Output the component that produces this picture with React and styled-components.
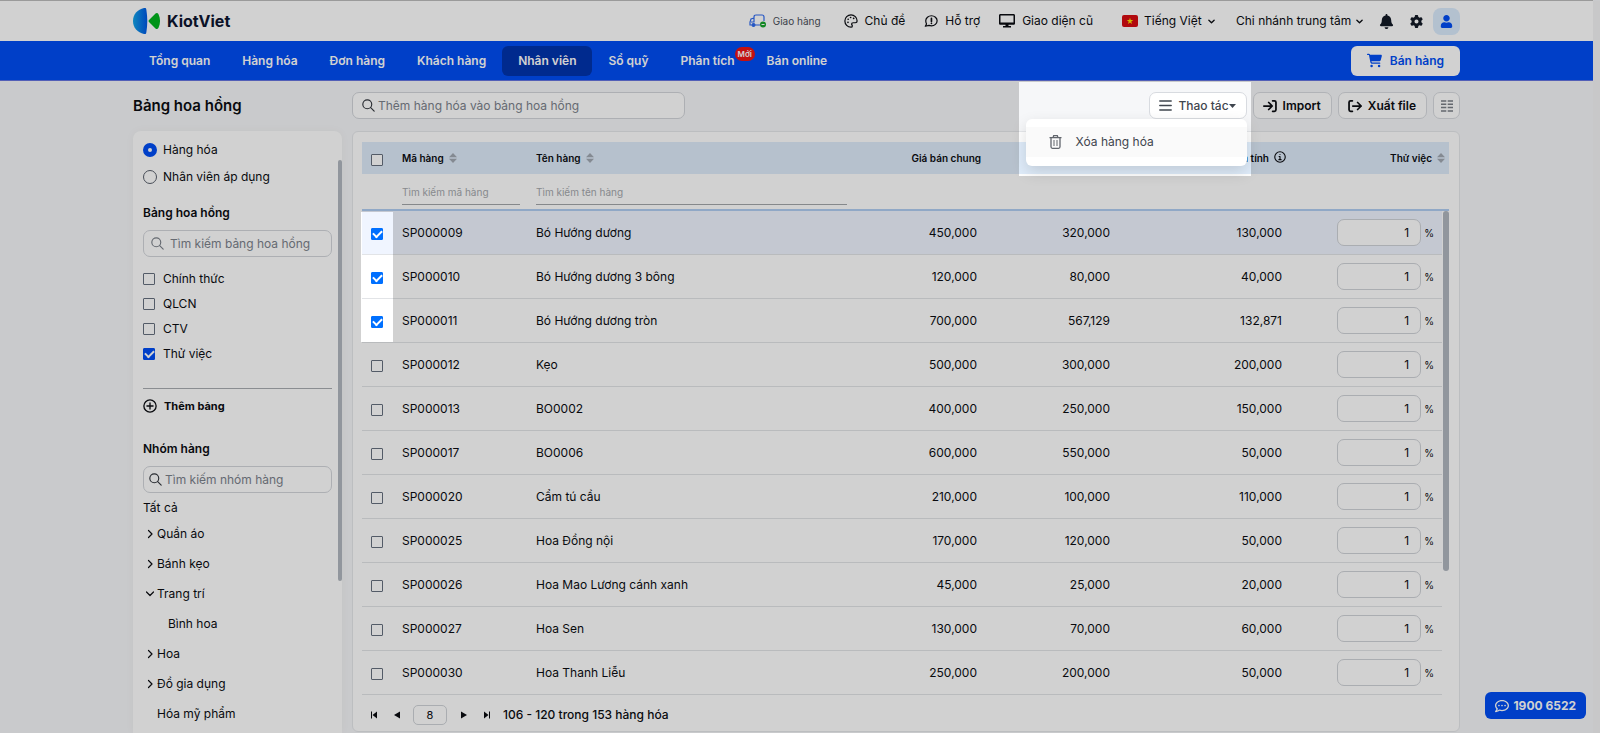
import { useState } from 'react';
import styled, { createGlobalStyle, css } from 'styled-components';
import { FaBell, FaUser, FaRegCommentDots } from 'react-icons/fa';
import { FaGear, FaCartShopping } from 'react-icons/fa6';

const GlobalStyle = createGlobalStyle`
  * {
    box-sizing: border-box;
  }

  body {
    margin: 0;
    background: #f6f7f9;
    color: #0b0d12;
    font-family: Inter, 'Noto Sans', sans-serif;
    font-size: 12px;
    line-height: 16px;
  }

  button, input, select {
    font: inherit;
    color: inherit;
  }

  a {
    color: inherit;
    text-decoration: none;
  }
`;

const Page = styled.div`
  display: flex;
  flex-direction: column;
  height: 100vh;
  overflow: hidden;
  padding-right: 7px;
`;

const PageScroll = styled.div`
  position: fixed;
  top: 1px;
  right: 0;
  bottom: 0;
  width: 7px;
  background: #f5f5f6;
`;

/* Tour backdrop, open over the actions menu and the ticked rows */
const Backdrop = styled.div`
  position: fixed;
  inset: 0;
  z-index: 10;
  pointer-events: none;
  background: rgba(0, 0, 0, 0.18);
  clip-path: polygon(
    evenodd,
    0 0, 100% 0, 100% 100%, 0 100%, 0 0,
    calc(100% - 581px) 82px, calc(100% - 349px) 82px,
    calc(100% - 349px) 176px, calc(100% - 581px) 176px,
    calc(100% - 581px) 82px, 0 0,
    361px 212px, 393px 212px, 393px 342px, 361px 342px, 361px 212px, 0 0
  );
`;

const TopBar = styled.header`
  flex: none;
  display: flex;
  align-items: center;
  justify-content: space-between;
  height: 41px;
  padding: 0 133px;
  border-top: 1px solid #bcbcbc;
  background: #fff;
`;

const Brand = styled.a`
  display: flex;
  align-items: center;
  gap: 6px;
  color: #0d1530;
  font-size: 16px;
  font-weight: 700;
`;

const TopLinks = styled.div`
  display: flex;
  align-items: center;
`;

const TopLink = styled.a`
  display: flex;
  align-items: center;
  gap: 7px;
  margin-right: ${(props) => (props.$small ? '23px' : '19px')};
  font-size: ${(props) => (props.$small ? '10px' : '12px')};
  color: ${(props) => (props.$small ? '#4b505a' : 'inherit')};
`;

const Picker = styled.label`
  display: flex;
  align-items: center;
  gap: ${(props) => (props.$first ? '6px' : '4px')};
  margin-left: ${(props) => (props.$first ? '10px' : '0')};
  margin-right: ${(props) => (props.$first ? '21px' : '16px')};
`;

const PickerSelect = styled.select`
  appearance: none;
  padding: 0;
  border: 0;
  background: none;
`;

const IconButton = styled.button`
  display: flex;
  align-items: center;
  justify-content: center;
  margin-right: 16px;
  padding: 0;
  border: 0;
  background: none;
  color: #131a26;
`;

const Avatar = styled.button`
  display: flex;
  align-items: center;
  justify-content: center;
  width: 27px;
  height: 27px;
  margin-left: -6px;
  padding: 0;
  border: 0;
  border-radius: 8px;
  background: #dbecfd;
  color: #004ef5;
`;

const NavBar = styled.nav`
  flex: none;
  display: flex;
  align-items: center;
  justify-content: space-between;
  height: 40px;
  padding: 0 133px;
  border-bottom: 1px solid #6474e0;
  background: #004ef5;
`;

const NavItems = styled.div`
  display: flex;
`;

const NavItem = styled.a`
  position: relative;
  padding: 7px 16px;
  border-radius: 6px;
  background: ${(props) => (props.$active ? '#0034ae' : 'none')};
  color: #fff;
  font-weight: 600;
`;

const NewBadge = styled.span`
  position: absolute;
  top: 1px;
  left: calc(100% - 16px);
  padding: 0 3px;
  border-radius: 7px;
  background: #f01414;
  font-size: 8px;
  line-height: 14px;
`;

const SellButton = styled.button`
  display: flex;
  align-items: center;
  gap: 8px;
  height: 30px;
  padding: 0 16px;
  border: 0;
  border-radius: 6px;
  background: #fff;
  color: #004ef5;
  font-weight: 600;
`;

const Toolbar = styled.div`
  flex: none;
  display: flex;
  align-items: center;
  gap: 6px;
  padding: 11px 133px 12px;
`;

const Title = styled.h1`
  width: 213px;
  margin: 0;
  font-size: 15px;
  font-weight: 600;
`;

const SearchBox = styled.label`
  display: flex;
  align-items: center;
  gap: ${(props) => (props.$muted ? '6px' : '3px')};
  height: 27px;
  padding: 0 ${(props) => (props.$muted ? '7px' : '5px')};
  border: 1px solid #d3d6db;
  border-radius: 7px;
  background: #fff;
  color: ${(props) => (props.$muted ? '#7b8089' : '#30343b')};

  svg {
    flex: none;
  }
`;

const ToolbarSearch = styled(SearchBox)`
  flex: 0 1 333px;
  margin-right: auto;
  padding: 0 9px;
`;

const SearchInput = styled.input`
  flex: 1;
  min-width: 0;
  padding: 0;
  border: 0;
  outline: 0;
  background: none;

  &::placeholder {
    color: #7c828c;
  }
`;

const ToolButton = styled.button`
  display: flex;
  align-items: center;
  justify-content: center;
  gap: 6px;
  height: 27px;
  min-width: 27px;
  padding: ${(props) => (props.$square ? '0' : '0 10px 0 9px')};
  border: 1px solid #d8dbe0;
  border-radius: 7px;
  background: #fff;
  color: ${(props) => (props.$soft ? '#3f454e' : 'inherit')};
  font-weight: ${(props) => (props.$soft ? 500 : 600)};
`;

const ButtonLabel = styled.span`
  display: flex;
  align-items: center;
`;

const MenuAnchor = styled.div`
  position: relative;
`;

const Menu = styled.div`
  position: absolute;
  top: 27px;
  right: 0;
  z-index: 5;
  width: 221px;
  padding: 8px 0 9px;
  border-radius: 6px;
  background: #fff;
  box-shadow: 0 6px 16px rgba(0, 0, 0, 0.14);
`;

const MenuItem = styled.button`
  display: flex;
  align-items: center;
  gap: 14px;
  width: 100%;
  height: 30px;
  padding: 0 23px;
  border: 0;
  background: #fafafa;
  color: #3f454e;
`;

const Content = styled.div`
  flex: 1;
  display: flex;
  gap: 10px;
  min-height: 0;
  padding: 0 133px;
`;

const Sidebar = styled.aside`
  position: relative;
  flex: none;
  width: 209px;
  padding: 5px 10px 0;
  overflow: hidden;
  border-radius: 8px 8px 0 0;
  background: #fff;
  box-shadow: 0 0 10px rgba(0, 0, 0, 0.04);
`;

const ScrollThumb = styled.div`
  position: absolute;
  top: ${(props) => props.$top}px;
  right: 0;
  width: ${(props) => props.$width}px;
  height: ${(props) => props.$height}px;
  border-radius: 3px;
  background: #b1b7c0;
`;

const Option = styled.label`
  display: flex;
  align-items: center;
  gap: ${(props) => (props.$radio ? '6px' : '8px')};
  height: ${(props) => (props.$radio ? '27px' : '25px')};
`;

const RadioGroup = styled.div`
  margin-bottom: 15px;
`;

const Radio = styled.input`
  appearance: none;
  flex: none;
  width: 14px;
  height: 14px;
  margin: 0;
  border: 1px solid #59606c;
  border-radius: 50%;

  &:checked {
    border: 5px solid #004ef5;
  }
`;

const tick = css`
  &:checked {
    border-color: ${(props) => props.$color || '#004ef5'};
    background: ${(props) => props.$color || '#004ef5'};
  }

  &:checked::after {
    content: '';
    width: 7px;
    height: 4px;
    margin-bottom: 2px;
    border: solid #fff;
    border-width: 0 0 2px 2px;
    transform: rotate(-45deg);
  }
`;

const Checkbox = styled.input`
  appearance: none;
  flex: none;
  display: inline-flex;
  align-items: center;
  justify-content: center;
  width: 12px;
  height: 12px;
  margin: 0;
  border: 1px solid #66707e;
  border-radius: 1px;
  background: #fff;
  vertical-align: middle;
  ${tick}
`;

const RowCheckbox = styled(Checkbox)`
  margin: 2px 0 0 1px;
`;

const GroupTitle = styled.h2`
  margin: 0 0 9px;
  font-size: 12px;
  line-height: 16px;
  font-weight: 600;
`;

const BoardList = styled.div`
  margin: 9px 0 22px;
`;

const AddBoard = styled.button`
  display: flex;
  align-items: center;
  gap: 7px;
  width: 100%;
  margin-bottom: 18px;
  padding: 9px 0;
  border: 0;
  border-top: 1px solid #a9acb1;
  background: none;
  font-size: 11px;
  font-weight: 700;
`;

const AllGroups = styled.a`
  display: block;
  padding-top: 7px;
`;

const Tree = styled.ul`
  margin: 3px 0 0;
  padding: 0;
  list-style: none;
`;

const TreeItem = styled.li`
  display: flex;
  align-items: center;
  gap: 3px;
  height: 30px;
  padding-left: ${(props) => (props.$child ? '14px' : '3px')};
`;

const TreeToggle = styled.span`
  display: flex;
  justify-content: center;
  width: 8px;
`;

const Card = styled.main`
  flex: 1;
  display: flex;
  flex-direction: column;
  min-width: 0;
  margin-bottom: 1px;
  padding: 10px 10px 0 9px;
  border: 1px solid #e6e8eb;
  border-radius: 6px;
  background: #fff;
`;

const TableWrap = styled.div`
  position: relative;
`;

const Table = styled.table`
  width: 100%;
  table-layout: fixed;
  border-collapse: separate;
  border-spacing: 0;
`;

const HeadCell = styled.th`
  height: 32px;
  padding: 0 4px 0 8px;
  background: #dfecfa;
  text-align: ${(props) => props.$align || 'left'};
  font-size: 10px;
  font-weight: 600;
  white-space: nowrap;

  svg {
    margin-left: 5px;
    vertical-align: -1px;
  }
`;

const FilterCell = styled.td`
  height: 37px;
  padding: 0 8px 4px;
  border-bottom: 2px solid #b0cdf2;
  vertical-align: bottom;
`;

const FilterInput = styled.input`
  display: block;
  width: 100%;
  height: 26px;
  padding: 0;
  border: 0;
  border-bottom: 1px solid #a3a6aa;
  outline: 0;
  background: none;
  font-size: 10px;

  &::placeholder {
    color: #a5a8ad;
  }
`;

const Row = styled.tr`
  background: ${(props) => (props.$current ? '#f0f5ff' : '#fff')};
`;

const Cell = styled.td`
  height: 44px;
  padding: 0 8px;
  border-bottom: 1px solid #e2e4e7;
  text-align: ${(props) => props.$align || 'left'};
  white-space: nowrap;
`;

const Gutter = styled.td`
  padding: 0;
  background: #fff;
`;

const Rate = styled.label`
  display: flex;
  align-items: center;
  justify-content: flex-end;
  gap: 3px;
  font-size: 10px;
`;

const RateInput = styled.input`
  width: 84px;
  height: 27px;
  padding: 0 11px;
  border: 1px solid #d0d3d8;
  border-radius: 7px;
  background: #fff;
  font-size: 12px;
  text-align: right;
`;

const Pager = styled.div`
  display: flex;
  align-items: center;
  gap: 10px;
  padding: 10px 5px;
`;

const PagerButton = styled.button`
  display: flex;
  align-items: center;
  justify-content: center;
  width: 13px;
  height: 16px;
  padding: 0;
  border: 0;
  background: none;
`;

const PageInput = styled.input`
  width: 34px;
  height: 20px;
  padding: 0;
  border: 1px solid #d0d3d8;
  border-radius: 5px;
  background: #fff;
  font-size: 11px;
  text-align: center;
`;

const PagerInfo = styled.span`
  font-weight: 500;
`;

const Hotline = styled.a`
  position: fixed;
  right: 14px;
  bottom: 14px;
  display: flex;
  align-items: center;
  gap: 4px;
  height: 27px;
  padding: 0 10px;
  border-radius: 6px;
  background: #004ef5;
  color: #fff;
  font-weight: 700;
`;

const Line = ({ size = 14, width = 1.5, children }) => (
  <svg width={size} height={size} viewBox="0 0 16 16" fill="none" stroke="currentColor" strokeWidth={width} strokeLinecap="round" strokeLinejoin="round">
    {children}
  </svg>
);

const Logo = () => (
  <svg width="28" height="28" viewBox="0 0 28 28">
    <defs>
      <linearGradient id="logoBlue">
        <stop offset="0" stopColor="#12a5e8" />
        <stop offset="1" stopColor="#0058e6" />
      </linearGradient>
    </defs>
    <path d="M0 14C0 7 4.500 2.500 11 1c1.500-.3 2 0 2.300 1.500 1.300 7.500 1.300 15.500 0 23C13 27 12.500 27.300 11 27 4.500 25.500 0 21 0 14z" fill="url(#logoBlue)" />
    <path d="M16 13l6.500-6.500c1-.9 2.300-.7 2.900.5 2.200 4.500 2.200 9.500 0 14-.6 1.200-1.900 1.400-2.900.5L16 15c-.6-.6-.6-1.400 0-2z" fill="#00b41e" />
  </svg>
);

const TruckIcon = () => (
  <svg width="17" height="14" viewBox="0 0 17 14" fill="none" stroke="#2f6bf0" strokeWidth="1.2">
    <path d="M5 4V3c0-1.300.7-2 2-2h6c1.300 0 2 .7 2 2v4M5 4L2 5 1 8v3h2M5 4v4H2M6 11h5" />
    <circle cx="4.500" cy="11" r="1.400" fill="#2f6bf0" />
    <circle cx="14" cy="10.500" r="3" fill="#18a52c" stroke="none" />
    <path d="M12.500 10.500h3" stroke="#fff" strokeWidth="1" />
  </svg>
);

const PaletteIcon = () => (
  <Line width={1.4}>
    <path d="M8 1a7 7 0 0 0-7 7c0 3.800 3 7 7 7 1 0 1.500-.6 1.500-1.400 0-1-.8-1.300-.8-2.300S9.500 10 10.500 10H13c1.200 0 2-.8 2-2 0-3.900-3.200-7-7-7z" />
    <path d="M4.500 9.500h.1M4.700 6h.1M7.500 4h.1M11 5h.1" strokeWidth="1.900" />
  </Line>
);

const SupportIcon = () => (
  <Line width={1.4}>
    <path d="M8.500 2C12 2 15 4.600 15 7.800s-3 5.700-6.500 5.700c-1 0-2-.2-2.800-.5L1.500 14l1.400-2.600C2.300 10.400 2 9.200 2 7.800 2 4.600 5 2 8.500 2z" />
    <path d="M8.500 5v3.500M8.500 10.700v.1" strokeWidth="1.900" />
  </Line>
);

const MonitorIcon = () => (
  <svg width="16" height="14" viewBox="0 0 16 14" fill="currentColor">
    <path fillRule="evenodd" d="M1.500 0h13c.8 0 1.500.6 1.500 1.400v8c0 .8-.7 1.400-1.500 1.400h-5V12H12v1.500H4V12h2.500v-1.200h-5C.7 10.800 0 10.200 0 9.400v-8C0 .6.700 0 1.500 0zm0 1.400v7h13v-7z" />
  </svg>
);

const FlagIcon = () => (
  <svg width="16" height="12" viewBox="0 0 16 12">
    <rect width="16" height="12" rx="2" fill="#d80b12" />
    <path d="M8 2.700l.8 2.400h2.500l-2 1.400.7 2.400-2-1.500-2 1.500.7-2.400-2-1.400h2.500z" fill="#ffe000" />
  </svg>
);

const ChevronDown = () => (
  <Line size={7} width={3}>
    <path d="M2 5l6 6 6-6" />
  </Line>
);

const CaretIcon = () => (
  <svg width="7" height="4" viewBox="0 0 7 4" fill="currentColor">
    <path d="M0 0h7L3.500 4z" />
  </svg>
);

const SearchIcon = () => (
  <Line size={13} width={1.4}>
    <circle cx="6.500" cy="6.500" r="5.500" />
    <path d="M10.700 10.700L15 15" />
  </Line>
);

const BarsIcon = () => (
  <Line size={13} width={1.8}>
    <path d="M1 2.500h14M1 8h14M1 13.500h14" />
  </Line>
);

const ImportIcon = () => (
  <Line width={2}>
    <path d="M1 8h9M6.500 4l4 4-4 4M11 2h2c1 0 1.800.8 1.800 1.800v8.400c0 1-.8 1.800-1.800 1.800h-2" />
  </Line>
);

const ExportIcon = () => (
  <Line width={2}>
    <path d="M5.500 8H15M11 4l4 4-4 4M5 2H3c-1 0-1.800.8-1.800 1.800v8.400c0 1 .8 1.800 1.800 1.800h2" />
  </Line>
);

const ColumnsIcon = () => (
  <svg width="12" height="12" viewBox="0 0 12 12" stroke="#7a7f87" strokeWidth="1.500">
    <path d="M0 1h5.300M6.700 1H12M0 4.300h5.300M6.700 4.300H12M0 7.600h5.300M6.700 7.600H12M0 10.900h5.300M6.700 10.900H12" />
  </svg>
);

const TrashIcon = () => (
  <svg width="13" height="14" viewBox="0 0 13 14" fill="none" stroke="#62666d" strokeWidth="1.300">
    <path d="M.5 2.700h12M4 2.700L4.700.7h3.600l.7 2M2 3v8.800c0 .8.600 1.500 1.400 1.500h6.200c.8 0 1.400-.7 1.400-1.500V3" />
    <path d="M5 5v6M8 5v6" strokeWidth="1" />
  </svg>
);

const SortIcon = () => (
  <svg width="8" height="10" viewBox="0 0 8 10" fill="#a2a9b3">
    <path d="M4 0l4 4.300H0zM4 10l4-4.300H0z" />
  </svg>
);

const InfoIcon = () => (
  <Line size={12} width={1.5}>
    <circle cx="8" cy="8" r="7" />
    <path d="M6.800 7.300H8v4M6.500 11.500h3M8 4.600v.1" />
  </Line>
);

const PlusIcon = () => (
  <Line width={1.5}>
    <circle cx="8" cy="8" r="7" />
    <path d="M8 4.500v7M4.500 8h7" />
  </Line>
);

const PagerIcon = ({ flip, end }) => (
  <svg width="6" height="8" viewBox="0 0 6 8" fill="currentColor">
    <g transform={flip ? 'translate(6 0) scale(-1 1)' : undefined}>
      <path d={end ? 'M0 .5h1v7H0zM6 .5v7L1.500 4z' : 'M6 .5v7L0 4z'} />
    </g>
  </svg>
);

const NAV = ['Tổng quan', 'Hàng hóa', 'Đơn hàng', 'Khách hàng', 'Nhân viên', 'Sổ quỹ', 'Phân tích', 'Bán online'];

const BOARDS = ['Chính thức', 'QLCN', 'CTV', 'Thử việc'];

const GROUPS = [
  { name: 'Quần áo', state: 'closed' },
  { name: 'Bánh kẹo', state: 'closed' },
  { name: 'Trang trí', state: 'open' },
  { name: 'Bình hoa', child: true },
  { name: 'Hoa', state: 'closed' },
  { name: 'Đồ gia dụng', state: 'closed' },
  { name: 'Hóa mỹ phẩm' },
];

const PRODUCTS = [
  ['SP000009', 'Bó Hướng dương', '450,000', '320,000', '130,000'],
  ['SP000010', 'Bó Hướng dương 3 bông', '120,000', '80,000', '40,000'],
  ['SP000011', 'Bó Hướng dương tròn', '700,000', '567,129', '132,871'],
  ['SP000012', 'Kẹo', '500,000', '300,000', '200,000'],
  ['SP000013', 'BO0002', '400,000', '250,000', '150,000'],
  ['SP000017', 'BO0006', '600,000', '550,000', '50,000'],
  ['SP000020', 'Cẩm tú cầu', '210,000', '100,000', '110,000'],
  ['SP000025', 'Hoa Đồng nội', '170,000', '120,000', '50,000'],
  ['SP000026', 'Hoa Mao Lương cánh xanh', '45,000', '25,000', '20,000'],
  ['SP000027', 'Hoa Sen', '130,000', '70,000', '60,000'],
  ['SP000030', 'Hoa Thanh Liễu', '250,000', '200,000', '50,000'],
];

const Header = () => (
  <>
    <TopBar>
      <Brand href="#">
        <Logo />
        KiotViet
      </Brand>
      <TopLinks>
        <TopLink href="#" $small><TruckIcon />Giao hàng</TopLink>
        <TopLink href="#"><PaletteIcon />Chủ đề</TopLink>
        <TopLink href="#"><SupportIcon />Hỗ trợ</TopLink>
        <TopLink href="#"><MonitorIcon />Giao diện cũ</TopLink>
        <Picker $first>
          <FlagIcon />
          <PickerSelect aria-label="Ngôn ngữ"><option>Tiếng Việt</option></PickerSelect>
          <ChevronDown />
        </Picker>
        <Picker>
          <PickerSelect aria-label="Chi nhánh"><option>Chi nhánh trung tâm</option></PickerSelect>
          <ChevronDown />
        </Picker>
        <IconButton aria-label="Thông báo"><FaBell size={15} /></IconButton>
        <IconButton aria-label="Thiết lập"><FaGear size={13} /></IconButton>
        <Avatar aria-label="Tài khoản"><FaUser size={13} /></Avatar>
      </TopLinks>
    </TopBar>
    <NavBar>
      <NavItems>
        {NAV.map((item) => (
          <NavItem key={item} href="#" $active={item === 'Nhân viên'}>
            {item}
            {item === 'Phân tích' && <NewBadge>Mới</NewBadge>}
          </NavItem>
        ))}
      </NavItems>
      <SellButton><FaCartShopping size={15} />Bán hàng</SellButton>
    </NavBar>
  </>
);

const Filters = () => {
  const [mode, setMode] = useState('Hàng hóa');

  return (
    <Sidebar>
      <RadioGroup>
        {['Hàng hóa', 'Nhân viên áp dụng'].map((item) => (
          <Option key={item} $radio>
            <Radio type="radio" name="mode" checked={mode === item} onChange={() => setMode(item)} />
            {item}
          </Option>
        ))}
      </RadioGroup>
      <GroupTitle>Bảng hoa hồng</GroupTitle>
      <SearchBox $muted>
        <SearchIcon />
        <SearchInput placeholder="Tìm kiếm bảng hoa hồng" />
      </SearchBox>
      <BoardList>
        {BOARDS.map((item) => (
          <Option key={item}>
            <Checkbox type="checkbox" defaultChecked={item === 'Thử việc'} />
            {item}
          </Option>
        ))}
      </BoardList>
      <AddBoard><PlusIcon />Thêm bảng</AddBoard>
      <GroupTitle>Nhóm hàng</GroupTitle>
      <SearchBox>
        <SearchIcon />
        <SearchInput placeholder="Tìm kiếm nhóm hàng" />
      </SearchBox>
      <AllGroups href="#">Tất cả</AllGroups>
      <Tree>
        {GROUPS.map((group) => (
          <TreeItem key={group.name} $child={group.child}>
            <TreeToggle>
              {group.state && (
                <Line size={10} width={2.4}>
                  <path d={group.state === 'open' ? 'M1 4l7 7 7-7' : 'M5 1l7 7-7 7'} />
                </Line>
              )}
            </TreeToggle>
            {group.name}
          </TreeItem>
        ))}
      </Tree>
      <ScrollThumb $top={29} $width={4} $height={421} />
    </Sidebar>
  );
};

const Products = () => {
  const [selected, setSelected] = useState(['SP000009', 'SP000010', 'SP000011']);

  const toggle = (code) => {
    setSelected(selected.includes(code) ? selected.filter((c) => c !== code) : [...selected, code]);
  };

  return (
    <Card>
      <TableWrap>
        <Table>
          <colgroup>
            <col width="32" />
            <col width="134" />
            <col />
            <col width="130" />
            <col width="133" />
            <col width="172" />
            <col width="152" />
            <col width="7" />
          </colgroup>
          <thead>
            <tr>
              <HeadCell><RowCheckbox type="checkbox" aria-label="Chọn tất cả" /></HeadCell>
              <HeadCell>Mã hàng<SortIcon /></HeadCell>
              <HeadCell>Tên hàng<SortIcon /></HeadCell>
              <HeadCell $align="right">Giá bán chung</HeadCell>
              <HeadCell $align="right">Giá vốn</HeadCell>
              <HeadCell $align="right">Lợi nhuận tạm tính<InfoIcon /></HeadCell>
              <HeadCell $align="right" colSpan={2}>Thử việc<SortIcon /></HeadCell>
            </tr>
            <tr>
              <FilterCell />
              <FilterCell><FilterInput placeholder="Tìm kiếm mã hàng" /></FilterCell>
              <FilterCell><FilterInput placeholder="Tìm kiếm tên hàng" /></FilterCell>
              <FilterCell colSpan={5} />
            </tr>
          </thead>
          <tbody>
            {PRODUCTS.map(([code, name, price, cost, profit], index) => (
              <Row key={code} $current={index === 0}>
                <Cell>
                  <RowCheckbox
                    type="checkbox"
                    $color="#0070ff"
                    aria-label={code}
                    checked={selected.includes(code)}
                    onChange={() => toggle(code)}
                  />
                </Cell>
                <Cell>{code}</Cell>
                <Cell>{name}</Cell>
                <Cell $align="right">{price}</Cell>
                <Cell $align="right">{cost}</Cell>
                <Cell $align="right">{profit}</Cell>
                <Cell>
                  <Rate>
                    <RateInput defaultValue="1" />
                    %
                  </Rate>
                </Cell>
                <Gutter />
              </Row>
            ))}
          </tbody>
        </Table>
        <ScrollThumb $top={69} $width={6} $height={360} />
      </TableWrap>
      <Pager>
        <PagerButton aria-label="Trang đầu"><PagerIcon end /></PagerButton>
        <PagerButton aria-label="Trang trước"><PagerIcon /></PagerButton>
        <PageInput aria-label="Trang" defaultValue="8" />
        <PagerButton aria-label="Trang sau"><PagerIcon flip /></PagerButton>
        <PagerButton aria-label="Trang cuối"><PagerIcon flip end /></PagerButton>
        <PagerInfo>106 - 120 trong 153 hàng hóa</PagerInfo>
      </Pager>
    </Card>
  );
};

const App = () => (
  <>
    <GlobalStyle />
    <Page>
      <Header />
      <Toolbar>
        <Title>Bảng hoa hồng</Title>
        <ToolbarSearch>
          <SearchIcon />
          <SearchInput placeholder="Thêm hàng hóa vào bảng hoa hồng" />
        </ToolbarSearch>
        <MenuAnchor>
          <ToolButton $soft><BarsIcon /><ButtonLabel>Thao tác<CaretIcon /></ButtonLabel></ToolButton>
          <Menu>
            <MenuItem><TrashIcon />Xóa hàng hóa</MenuItem>
          </Menu>
        </MenuAnchor>
        <ToolButton><ImportIcon />Import</ToolButton>
        <ToolButton><ExportIcon />Xuất file</ToolButton>
        <ToolButton $square aria-label="Cột hiển thị"><ColumnsIcon /></ToolButton>
      </Toolbar>
      <Content>
        <Filters />
        <Products />
      </Content>
    </Page>
    <PageScroll />
    <Hotline href="tel:19006522"><FaRegCommentDots size={14} />1900 6522</Hotline>
    <Backdrop />
  </>
);

export default App;
